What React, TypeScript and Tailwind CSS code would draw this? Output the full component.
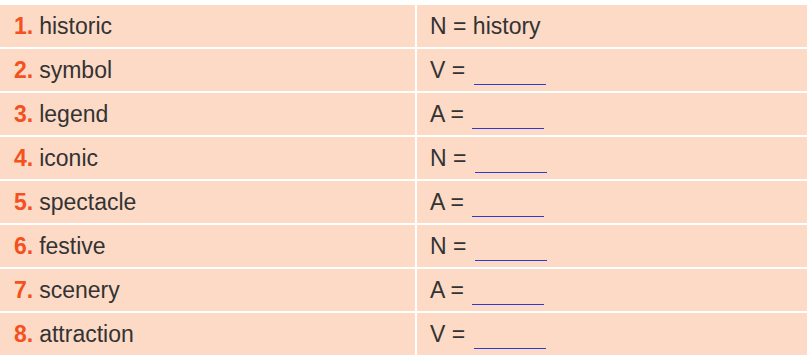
import React from "react";

const rows: [string, string, string | null][] = [
  ["historic", "N", "history"],
  ["symbol", "V", null],
  ["legend", "A", null],
  ["iconic", "N", null],
  ["spectacle", "A", null],
  ["festive", "N", null],
  ["scenery", "A", null],
  ["attraction", "V", null],
];

export default function App() {
  return (
    <div
      className="w-[810px] h-[356px] bg-white pt-[5px] pr-[3px] overflow-hidden"
      style={{ fontFamily: '"Liberation Sans", Arial, sans-serif' }}
    >
      <div className="grid grid-cols-[415px_1fr] gap-x-[2px] gap-y-[2px] text-[23px] text-[#333333]">
        {rows.map(([w, pos, ans], i) => (
          <React.Fragment key={i}>
            <div className="h-[42px] bg-[#fcdac6] flex items-center pl-[14px]">
              <span className="font-bold text-[#f4511e]">{i + 1}.</span>
              <span className="ml-[6px]">{w}</span>
            </div>
            <div className="h-[42px] bg-[#fcdac6] flex items-center pl-[13px]">
              <span>
                {pos} ={" "}
                {ans ? (
                  ans
                ) : (
                  <span className="inline-block w-[72px] h-0 border-b border-solid border-[#2f3bd0] align-[-7px] ml-[2px]" />
                )}
              </span>
            </div>
          </React.Fragment>
        ))}
      </div>
    </div>
  );
}
